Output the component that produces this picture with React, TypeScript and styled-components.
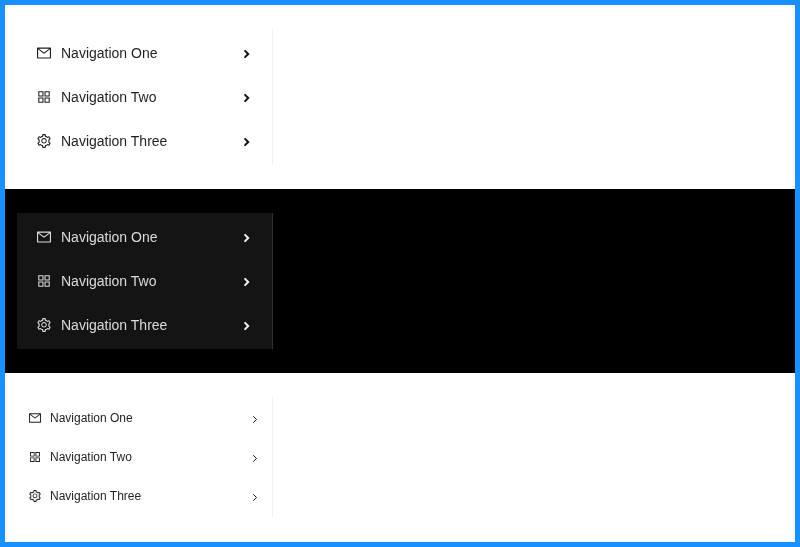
import React from "react";
import styled, { createGlobalStyle, css } from "styled-components";
import { AiOutlineAppstore, AiOutlineMail, AiOutlineSetting } from "react-icons/ai";

const GlobalStyle = createGlobalStyle`
  *, *::before, *::after { box-sizing: border-box; }
  body { margin: 0; }
`;

const Frame = styled.main`
  display: flex;
  flex-direction: column;
  height: 547px;
  border: 5px solid #1890ff;
  background: #fff;
  font-family: "Liberation Sans", Arial, sans-serif;
`;

const Section = styled.section<{ $dark?: boolean }>`
  padding: 24px 12px;
  background: ${({ $dark }) => ($dark ? "#000" : "#fff")};
`;

const Menu = styled.ul<{ $dark?: boolean; $compact?: boolean }>`
  display: flex;
  flex-direction: column;
  gap: 4px;
  width: 256px;
  margin: 0;
  padding: 4px 0;
  list-style: none;
  border-right: 1px solid ${({ $dark }) => ($dark ? "#303030" : "#f0f0f0")};
  background: ${({ $dark }) => ($dark ? "#141414" : "#fff")};
  color: ${({ $dark }) => ($dark ? "#dcdcdc" : "#1f1f1f")};
  font-size: ${({ $compact }) => ($compact ? 12 : 14)}px;
  will-change: transform;
`;

const Item = styled.li<{ $compact?: boolean }>`
  display: flex;
  align-items: center;
  cursor: pointer;
  ${({ $compact }) =>
    $compact
      ? css`
          height: 35px;
          padding: 0 14px 0 12px;
          line-height: 35px;
        `
      : css`
          height: 40px;
          padding: 0 22px 0 20px;
          line-height: 40px;
        `}

  > svg {
    flex: none;
    margin-bottom: ${({ $compact }) => ($compact ? 1 : 0)}px;
  }
`;

const Label = styled.span<{ $compact?: boolean }>`
  flex: 1;
  margin-left: ${({ $compact }) => ($compact ? 9 : 10)}px;
  white-space: nowrap;
`;

const Arrow = styled.span<{ $compact?: boolean; $dark?: boolean }>`
  display: flex;
  flex: none;
  width: ${({ $compact }) => ($compact ? 6 : 7)}px;
  height: 10px;
  margin-top: ${({ $compact }) => ($compact ? 1 : 2)}px;
  color: ${({ $dark }) => ($dark ? "#f0f0f0" : "#111")};

  svg {
    width: 100%;
    height: 100%;
    fill: none;
    stroke: currentColor;
  }
`;

const entries = [
  { label: "Navigation One", Icon: AiOutlineMail },
  { label: "Navigation Two", Icon: AiOutlineAppstore },
  { label: "Navigation Three", Icon: AiOutlineSetting },
];

function NavigationMenu({ dark, compact }: { dark?: boolean; compact?: boolean }) {
  return (
    <Section $dark={dark}>
      <Menu $dark={dark} $compact={compact}>
        {entries.map(({ label, Icon }) => (
          <Item key={label} $compact={compact}>
            <Icon viewBox="64 64 896 896" strokeWidth="0" />
            <Label $compact={compact}>{label}</Label>
            <Arrow $compact={compact} $dark={dark}>
              {compact ? (
                <svg viewBox="0 0 6 10" strokeWidth="1">
                  <path d="M1.3 2.3L4.5 5.5L1.3 8.7" />
                </svg>
              ) : (
                <svg viewBox="0 0 7 10" strokeWidth="2" strokeLinecap="round">
                  <path d="M2.1 1.9L5.2 5L2.1 8.1" />
                </svg>
              )}
            </Arrow>
          </Item>
        ))}
      </Menu>
    </Section>
  );
}

export default function App() {
  return (
    <>
      <GlobalStyle />
      <Frame>
        <NavigationMenu />
        <NavigationMenu dark />
        <NavigationMenu compact />
      </Frame>
    </>
  );
}
